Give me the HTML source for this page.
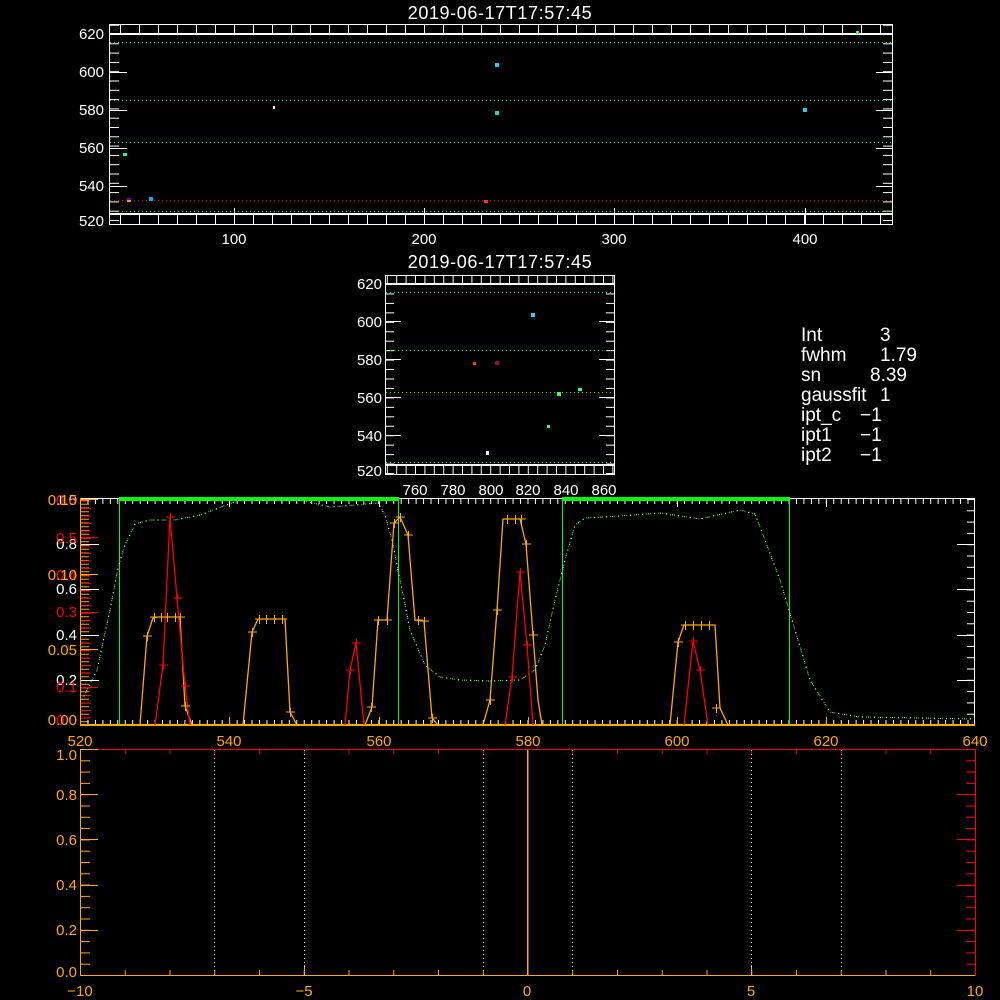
<!DOCTYPE html>
<html><head><meta charset="utf-8"><style>
html,body{margin:0;padding:0;background:#000;width:1000px;height:1000px;overflow:hidden}
svg{display:block}
text{font-family:"Liberation Sans",sans-serif;font-size:15px}
</style></head><body>
<svg width="1000" height="1000" viewBox="0 0 1000 1000">
<defs>
<!-- top panel -->
<pattern id="tY" x="0" y="34" width="20" height="9.3" patternUnits="userSpaceOnUse"><rect width="20" height="1" fill="#fff"/></pattern>
<pattern id="tX" x="44" y="0" width="19" height="20" patternUnits="userSpaceOnUse"><rect width="1" height="20" fill="#fff"/></pattern>
<!-- small panel -->
<pattern id="mY" x="0" y="284" width="20" height="9.45" patternUnits="userSpaceOnUse"><rect width="20" height="1" fill="#fff"/></pattern>
<pattern id="mX" x="415" y="0" width="9.4" height="20" patternUnits="userSpaceOnUse"><rect width="1" height="20" fill="#fff"/></pattern>
<!-- spectrum -->
<pattern id="sRo" x="0" y="725" width="20" height="3.75" patternUnits="userSpaceOnUse"><rect width="20" height="1" fill="#fa0"/></pattern>
<pattern id="sRr" x="0" y="725" width="20" height="7.48" patternUnits="userSpaceOnUse"><rect width="20" height="1" fill="#f00"/></pattern>
<pattern id="sRw" x="0" y="499" width="20" height="11.3" patternUnits="userSpaceOnUse"><rect width="20" height="1" fill="#fff"/></pattern>
<pattern id="sXw" x="80" y="0" width="7.458" height="20" patternUnits="userSpaceOnUse"><rect width="1" height="20" fill="#fff"/></pattern>
<pattern id="sXo" x="80" y="0" width="37.29" height="20" patternUnits="userSpaceOnUse"><rect width="1" height="20" fill="#fa0"/></pattern>
<!-- bottom -->
<pattern id="bYo" x="0" y="749" width="20" height="11.3" patternUnits="userSpaceOnUse"><rect width="20" height="1" fill="#fa0"/></pattern>
<pattern id="bYr" x="0" y="749" width="20" height="11.3" patternUnits="userSpaceOnUse"><rect width="20" height="1" fill="#f00"/></pattern>
<pattern id="bXo" x="80" y="0" width="44.75" height="20" patternUnits="userSpaceOnUse"><rect width="1" height="20" fill="#fa0"/></pattern>
<pattern id="bXr" x="80" y="0" width="44.75" height="20" patternUnits="userSpaceOnUse"><rect width="1" height="20" fill="#f00"/></pattern>
</defs>
<rect width="1000" height="1000" fill="#000"/>
<!-- TOP PANEL -->
<text x="500" y="19" fill="#fff" text-anchor="middle" style="font-size:18px;letter-spacing:0.6px">2019-06-17T17:57:45</text>
<rect x="110" y="25" width="9" height="199" fill="url(#tY)"/>
<rect x="883" y="25" width="9" height="199" fill="url(#tY)"/>
<rect x="110" y="215" width="782" height="9" fill="url(#tX)"/>
<rect x="110" y="25" width="782" height="8" fill="url(#tX)"/>
<g fill="#fff">
<rect x="110" y="34" width="17" height="1"/><rect x="110" y="72" width="17" height="1"/><rect x="110" y="110" width="17" height="1"/><rect x="110" y="148" width="17" height="1"/><rect x="110" y="186" width="17" height="1"/>
<rect x="876" y="34" width="16" height="1"/><rect x="876" y="72" width="16" height="1"/><rect x="876" y="110" width="16" height="1"/><rect x="876" y="148" width="16" height="1"/><rect x="876" y="186" width="16" height="1"/>
<rect x="234" y="208" width="1" height="16"/><rect x="424" y="208" width="1" height="16"/><rect x="614" y="208" width="1" height="16"/><rect x="805" y="208" width="1" height="16"/>
<rect x="110" y="33" width="782" height="2"/>
<rect x="110" y="213" width="782" height="2"/>
</g>
<rect x="109.5" y="24.5" width="783" height="200" fill="none" stroke="#fff"/>
<g stroke-dasharray="1 3" stroke-width="1">
<line x1="110" y1="42.5" x2="892" y2="42.5" stroke="#0f0"/>
<line x1="110" y1="100.5" x2="892" y2="100.5" stroke="#0f0"/>
<line x1="110" y1="142.5" x2="892" y2="142.5" stroke="#0f0"/>
<line x1="110" y1="211.5" x2="892" y2="211.5" stroke="#0f0"/>
<line x1="110" y1="200.5" x2="892" y2="200.5" stroke="#f00"/>
</g>
<g fill="#fff" text-anchor="end">
<text x="104" y="39">620</text><text x="104" y="77">600</text><text x="104" y="115">580</text><text x="104" y="153">560</text><text x="104" y="191">540</text><text x="104" y="226">520</text>
</g>
<g fill="#fff" text-anchor="middle">
<text x="234" y="244">100</text><text x="424" y="244">200</text><text x="614" y="244">300</text><text x="805" y="244">400</text>
</g>
<rect x="123" y="153" width="4" height="3" fill="#1f8"/>
<rect x="127" y="199" width="4" height="3" fill="#f90"/><rect x="127" y="198" width="4" height="2" fill="#60c"/>
<rect x="149" y="197" width="4" height="4" fill="#1af"/>
<rect x="273" y="106" width="2" height="3" fill="#fff"/>
<rect x="484" y="200" width="4" height="3" fill="#f33"/>
<rect x="495" y="63" width="4" height="4" fill="#2cf"/>
<rect x="495" y="111" width="4" height="4" fill="#2d9"/>
<rect x="803" y="108" width="4" height="4" fill="#2cd"/>
<rect x="856" y="31" width="3" height="3" fill="#4f4"/>
<!-- MIDDLE SMALL PANEL -->
<text x="500" y="268" fill="#fff" text-anchor="middle" style="font-size:18px;letter-spacing:0.6px">2019-06-17T17:57:45</text>
<rect x="386" y="276" width="8" height="198" fill="url(#mY)"/>
<rect x="606" y="276" width="8" height="198" fill="url(#mY)"/>
<rect x="386" y="466" width="228" height="8" fill="url(#mX)"/>
<rect x="386" y="276" width="228" height="8" fill="url(#mX)"/>
<g fill="#fff">
<rect x="386" y="321" width="15" height="1"/><rect x="386" y="359" width="15" height="1"/><rect x="386" y="397" width="15" height="1"/><rect x="386" y="435" width="15" height="1"/>
<rect x="599" y="321" width="15" height="1"/><rect x="599" y="359" width="15" height="1"/><rect x="599" y="397" width="15" height="1"/><rect x="599" y="435" width="15" height="1"/>
<rect x="386" y="283" width="228" height="2"/>
<rect x="386" y="464" width="228" height="2"/>
</g>
<rect x="385.5" y="275.5" width="229" height="199" fill="none" stroke="#fff"/>
<g stroke-dasharray="1 3">
<line x1="386" y1="292.5" x2="614" y2="292.5" stroke="#0f0"/>
<line x1="386" y1="350.5" x2="614" y2="350.5" stroke="#0f0"/>
<line x1="386" y1="392.5" x2="614" y2="392.5" stroke="#0f0"/>
<line x1="386" y1="462.5" x2="614" y2="462.5" stroke="#0f0"/>
</g>
<g fill="#fff" text-anchor="end">
<text x="382" y="289">620</text><text x="382" y="327">600</text><text x="382" y="365">580</text><text x="382" y="403">560</text><text x="382" y="441">540</text><text x="382" y="476">520</text>
</g>
<g fill="#fff" text-anchor="middle">
<text x="415" y="495">760</text><text x="453" y="495">780</text><text x="491" y="495">800</text><text x="528" y="495">820</text><text x="566" y="495">840</text><text x="604" y="495">860</text>
</g>
<rect x="473" y="362" width="3" height="3" fill="#f40"/>
<rect x="495" y="361" width="4" height="4" fill="#a04"/>
<rect x="531" y="313" width="4" height="4" fill="#3cf"/>
<rect x="486" y="451" width="3" height="4" fill="#fff"/>
<rect x="547" y="425" width="3" height="3" fill="#3f9"/>
<rect x="557" y="392" width="4" height="4" fill="#3f5"/>
<rect x="578" y="388" width="4" height="3" fill="#3f8"/>
<!-- info text -->
<g fill="#fff">
<text x="801" y="341" style="font-size:19px">Int</text><text x="880" y="341" style="font-size:19px">3</text>
<text x="801" y="361" style="font-size:19px">fwhm</text><text x="880" y="361" style="font-size:19px">1.79</text>
<text x="801" y="381" style="font-size:19px">sn</text><text x="870" y="381" style="font-size:19px">8.39</text>
<text x="801" y="401" style="font-size:19px">gaussfit</text><text x="880" y="401" style="font-size:19px">1</text>
<text x="801" y="421" style="font-size:19px">ipt_c</text><text x="860" y="421" style="font-size:19px">−1</text>
<text x="801" y="441" style="font-size:19px">ipt1</text><text x="860" y="441" style="font-size:19px">−1</text>
<text x="801" y="461" style="font-size:19px">ipt2</text><text x="860" y="461" style="font-size:19px">−1</text>
</g>
<!-- SPECTRUM PANEL -->
<rect x="80.5" y="498.5" width="894" height="226" fill="none" stroke="#fff"/>
<rect x="81" y="499" width="8" height="226" fill="url(#sRo)"/>
<rect x="81" y="499" width="10" height="226" fill="url(#sRr)"/>
<rect x="967" y="499" width="8" height="226" fill="url(#sRw)"/>
<rect x="81" y="720" width="894" height="5" fill="url(#sXw)"/>
<rect x="81" y="499" width="894" height="5" fill="url(#sXw)"/>
<g fill="#fa0">
<rect x="81" y="499" width="17" height="1"/><rect x="81" y="574" width="17" height="1"/><rect x="81" y="649" width="17" height="1"/>
<rect x="80" y="724" width="895" height="2"/><rect x="80" y="498" width="1" height="227"/>
</g>
<g fill="#f00"><rect x="81" y="537" width="17" height="1"/><rect x="81" y="612" width="17" height="1"/><rect x="81" y="687" width="17" height="1"/></g>
<g fill="#fff">
<rect x="81" y="544" width="18" height="1"/><rect x="81" y="589" width="18" height="1"/><rect x="81" y="635" width="18" height="1"/><rect x="81" y="680" width="18" height="1"/>
<rect x="957" y="544" width="18" height="1"/><rect x="957" y="589" width="18" height="1"/><rect x="957" y="635" width="18" height="1"/><rect x="957" y="680" width="18" height="1"/>
<rect x="229" y="499" width="1" height="8"/><rect x="379" y="499" width="1" height="8"/><rect x="677" y="499" width="1" height="8"/><rect x="826" y="499" width="1" height="8"/>
</g>
<g fill="#fa0"><rect x="229" y="717" width="1" height="8"/><rect x="379" y="717" width="1" height="8"/><rect x="528" y="717" width="1" height="8"/><rect x="677" y="717" width="1" height="8"/><rect x="826" y="717" width="1" height="8"/></g>
<g fill="#fff" text-anchor="end">
<text x="77" y="549">0.8</text><text x="77" y="594">0.6</text><text x="77" y="640">0.4</text><text x="77" y="685">0.2</text><text x="77" y="505">1.0</text>
</g>
<g fill="#f00" text-anchor="end">
<text x="77" y="543">0.5</text><text x="77" y="617">0.3</text><text x="77" y="692">0.1</text><text x="77" y="580">0.4</text><text x="77" y="505">0.6</text><text x="77" y="725">0.0</text>
</g>
<g fill="#fa0" text-anchor="end">
<text x="77" y="505">0.15</text><text x="77" y="580">0.10</text><text x="77" y="655">0.05</text><text x="77" y="725">0.00</text>
</g>
<g fill="#fa0" text-anchor="middle">
<text x="80" y="746">520</text><text x="229" y="746">540</text><text x="379" y="746">560</text><text x="528" y="746">580</text><text x="677" y="746">600</text><text x="826" y="746">620</text><text x="975" y="746">640</text>
</g>
<!-- green band lines -->
<g fill="#0f0">
<rect x="119" y="499" width="1" height="226"/><rect x="398" y="499" width="1" height="226"/>
<rect x="562" y="499" width="1" height="226"/><rect x="789" y="499" width="1" height="226"/>
<rect x="119" y="497" width="280" height="4"/>
<rect x="562" y="497" width="228" height="4"/>
</g>
<!-- green dotted curve -->
<polyline fill="none" stroke="#0f0" stroke-width="1.2" stroke-dasharray="1 3" points="82,700 97,670 110,610 118,568 125,545 135,524 150,520 175,520 200,515 240,500 300,500 330,507 355,505 378,503 385,515 392,540 400,580 410,630 425,665 440,677 460,680 490,681 520,680 535,670 545,645 555,600 565,560 575,525 585,518 620,516 660,513 700,519 740,510 755,514 765,540 780,580 795,630 810,680 830,712 860,717 920,718 975,719"/>
<polyline fill="none" stroke="#fff" stroke-width="1" stroke-dasharray="1 5" stroke-dashoffset="2" points="82,700 97,670 110,610 118,568 125,545 135,524 150,520 175,520 200,515 240,500 300,500 330,507 355,505 378,503 385,515 392,540 400,580 410,630 425,665 440,677 460,680 490,681 520,680 535,670 545,645 555,600 565,560 575,525 585,518 620,516 660,513 700,519 740,510 755,514 765,540 780,580 795,630 810,680 830,712 860,717 920,718 975,719"/>
<!-- orange curves -->
<g fill="none" stroke="#fa0" stroke-width="1.3">
<polyline points="140,725 147,636 153,618 158,617 180,617 185,706 192,725"/>
<polyline points="243,725 252,632 258,619 285,619 290,712 297,725"/>
<polyline points="365,725 372,707 378,620 387,620 394,523 400,517 408,535 415,620 424,621 432,718 438,725"/>
<polyline points="483,725 490,700 497,610 503,519 520,519 526,544 533,635 538,700 542,725"/>
<polyline points="670,725 678,642 684,625 715,625 720,708 728,725"/>
</g>
<g fill="none" stroke="#f00" stroke-width="1.3">
<polyline points="155,725 163,665 170,517 177,598 185,686 190,725"/>
<polyline points="345,725 350,670 356,643 364,725"/>
<polyline points="505,725 512,677 520,572 527,645 533,725"/>
<polyline points="684,725 693,641 700,670 708,725"/>
</g>
<g stroke="#fa0" fill="none">
<path d="M143 636h9M147.5 632v9 M150 617h9M154.5 613v9 M157 617h9M161.5 613v9 M163 617h9M167.5 613v9 M171 617h9M175.5 613v9 M176 617h9M180.5 613v9 M181 706h9M185.5 702v9"/>
<path d="M248 632h9M252.5 628v9 M255 619h9M259.5 615v9 M262 619h9M266.5 615v9 M270 619h9M274.5 615v9 M278 619h9M282.5 615v9 M286 712h9M290.5 708v9"/>
<path d="M367 707h9M371.5 703v9 M374 620h9M378.5 616v9 M383 620h9M387.5 616v9 M390 523h9M394.5 519v9 M396 517h9M400.5 513v9 M404 535h9M408.5 531v9 M414 620h9M418.5 616v9 M420 621h9M424.5 617v9 M428 718h9M432.5 714v9"/>
<path d="M486 700h9M490.5 696v9 M493 610h9M497.5 606v9 M503 519h9M507.5 515v9 M511 519h9M515.5 515v9 M517 519h9M521.5 515v9 M522 544h9M526.5 540v9 M529 635h9M533.5 631v9"/>
<path d="M674 642h9M678.5 638v9 M681 625h9M685.5 621v9 M689 625h9M693.5 621v9 M697 625h9M701.5 621v9 M705 625h9M709.5 621v9 M712 708h9M716.5 704v9"/>
</g>
<g stroke="#f00" fill="none">
<path d="M159 665h9M163.5 661v9 M166 517h9M170.5 513v9 M173 598h9M177.5 594v9 M181 686h9M185.5 682v9"/>
<path d="M346 670h9M350.5 666v9 M352 643h9M356.5 639v9"/>
<path d="M508 677h9M512.5 673v9 M516 572h9M520.5 568v9 M523 645h9M527.5 641v9"/>
<path d="M689 641h9M693.5 637v9 M696 670h9M700.5 666v9"/>
</g>
<!-- BOTTOM PANEL -->
<rect x="81" y="749" width="9" height="226" fill="url(#bYo)"/>
<rect x="966" y="749" width="9" height="226" fill="url(#bYr)"/>
<rect x="81" y="750" width="894" height="4" fill="url(#bXr)"/>
<rect x="81" y="970" width="894" height="5" fill="url(#bXo)"/>
<g fill="#fa0">
<rect x="80" y="749" width="18" height="1"/><rect x="80" y="794" width="18" height="1"/><rect x="80" y="839" width="18" height="1"/><rect x="80" y="885" width="18" height="1"/><rect x="80" y="930" width="18" height="1"/>
<rect x="80" y="975" width="896" height="1"/><rect x="80" y="749" width="1" height="227"/>
<rect x="304" y="965" width="1" height="10"/><rect x="751" y="965" width="1" height="10"/>
</g>
<g fill="#f00">
<rect x="98" y="749" width="878" height="1"/><rect x="975" y="749" width="1" height="227"/>
<rect x="957" y="794" width="18" height="1"/><rect x="957" y="839" width="18" height="1"/><rect x="957" y="885" width="18" height="1"/><rect x="957" y="930" width="18" height="1"/>
</g>
<g stroke="#fff" stroke-dasharray="1 3">
<line x1="214.5" y1="750" x2="214.5" y2="975"/><line x1="304.5" y1="750" x2="304.5" y2="975"/><line x1="483.5" y1="750" x2="483.5" y2="975"/><line x1="572.5" y1="750" x2="572.5" y2="975"/><line x1="751.5" y1="750" x2="751.5" y2="975"/><line x1="841.5" y1="750" x2="841.5" y2="975"/>
</g>
<rect x="527" y="750" width="1.5" height="225" fill="#fa0"/>
<g fill="#fa0" text-anchor="end">
<text x="77" y="760">1.0</text><text x="77" y="800">0.8</text><text x="77" y="845">0.6</text><text x="77" y="890">0.4</text><text x="77" y="935">0.2</text><text x="77" y="977">0.0</text>
</g>
<g fill="#fa0" text-anchor="middle">
<text x="80" y="996">−10</text><text x="304" y="996">−5</text><text x="527" y="996">0</text><text x="751" y="996">5</text><text x="975" y="996">10</text>
</g>
</svg>
</body></html>
